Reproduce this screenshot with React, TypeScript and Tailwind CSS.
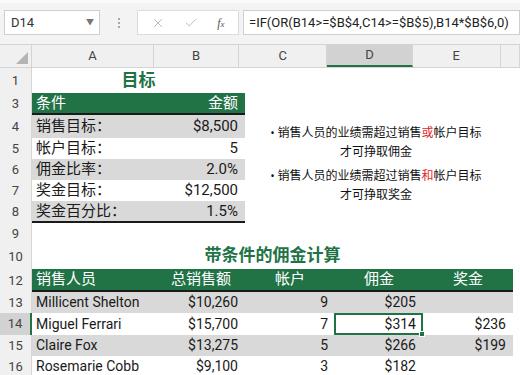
import { X, Check } from 'lucide-react';

const cjk = 'Roboto, "Noto Sans CJK SC", sans-serif';

type Cell = { text?: React.ReactNode; align?: 'left' | 'right' | 'center' };

const cols = [125, 88, 90, 88, 90, 20];

function RowHead({ n, active }: { n: number; active?: boolean }) {
  return (
    <div
      className={
        'w-[32px] shrink-0 flex items-center justify-center text-[13px] text-[#444] ' +
        (active ? 'bg-[#d2d2d2] border-r-2 border-[#217346]' : 'bg-[#f0f0f0] border-r border-[#d4d4d4]')
      }
    >
      {n}
    </div>
  );
}

function Row({
  n,
  h,
  cells = [],
  bg = '',
  span = 0,
  border,
  active,
  children,
}: {
  n: number;
  h: string;
  cells?: Cell[];
  bg?: string;
  span?: number;
  border?: boolean;
  active?: boolean;
  children?: React.ReactNode;
}) {
  return (
    <div className={'flex ' + h}>
      <RowHead n={n} active={active} />
      {children ?? (
        <div className="flex">
          <div className={'flex ' + bg + (border ? ' border-b-2 border-[#1a1a1a]' : '')}>
            {cells.slice(0, span).map((c, i) => (
              <Td key={i} w={cols[i]} c={c} />
            ))}
          </div>
          {cells.slice(span).map((c, i) => (
            <Td key={i} w={cols[i + span]} c={c} />
          ))}
        </div>
      )}
    </div>
  );
}

function Td({ w, c }: { w: number; c: Cell }) {
  const a = c.align === 'right' ? 'justify-end pr-[7px]' : c.align === 'center' ? 'justify-center' : 'justify-start pl-[4px]';
  return (
    <div className={'relative flex items-center whitespace-nowrap ' + a} style={{ width: w }}>
      {c.text}
    </div>
  );
}

const people = [
  ['Millicent Shelton', '$10,260', '9', '$205', ''],
  ['Miguel Ferrari', '$15,700', '7', '$314', '$236'],
  ['Claire Fox', '$13,275', '5', '$266', '$199'],
  ['Rosemarie Cobb', '$9,100', '3', '$182', ''],
];

const goals = [
  ['销售目标：', '$8,500'],
  ['帐户目标：', '5'],
  ['佣金比率：', '2.0%'],
  ['奖金目标：', '$12,500'],
  ['奖金百分比：', '1.5%'],
];

const goalH = ['h-[23px]', 'h-[21px]', 'h-[21px]', 'h-[21px]', 'h-[22px]'];
const peopleH = ['h-[21px]', 'h-[22px]', 'h-[21px]', 'h-[21px]'];

export default function App() {
  return (
    <div className="w-[520px] h-[375px] overflow-hidden bg-white relative text-[#1a1a1a]" style={{ fontFamily: cjk }}>
      {/* formula bar */}
      <div className="h-[45px] bg-[#f3f3f3] border-t-[3px] border-[#fafafa] border-b border-b-[#d4d4d4] flex items-center gap-[4px] pl-[4px] pb-[2px]">
        <div className="w-[96px] h-[25px] bg-white border border-[#cfcfcf] flex items-center justify-between pl-[6px] pr-[5px] text-[13px] text-[#333]">
          <span>D14</span>
          <span className="text-[8px] text-[#777]">▼</span>
        </div>
        <div className="w-[29px] flex flex-col items-center gap-[2px]">
          <span className="w-[2px] h-[2px] bg-[#aaa]" />
          <span className="w-[2px] h-[2px] bg-[#aaa]" />
          <span className="w-[2px] h-[2px] bg-[#aaa]" />
        </div>
        <div className="w-[102px] h-[25px] bg-white border border-[#dcdcdc] flex items-center justify-around px-[4px] text-[#b0b0b0]">
          <X size={14} strokeWidth={1.5} />
          <Check size={14} strokeWidth={1.5} />
          <span className="text-[12px] italic text-[#555]" style={{ fontFamily: '"Liberation Serif", serif' }}>
            f<span className="text-[9px]">x</span>
          </span>
        </div>
        <div className="flex-1 h-[25px] bg-white border border-[#cfcfcf] flex items-center pl-[5px] text-[13px] text-[#222] whitespace-nowrap overflow-hidden">
          =IF(OR(B14&gt;=$B$4,C14&gt;=$B$5),B14*$B$6,0)
        </div>
      </div>

      {/* column headers */}
      <div className="flex h-[23px] bg-[#f0f0f0] border-b border-[#d4d4d4] text-[13px] text-[#444]">
        <div className="w-[32px] shrink-0 border-r border-[#d4d4d4] flex items-end justify-end pr-[3px] pb-[3px]">
          <div className="w-0 h-0 border-l-[12px] border-l-transparent border-b-[12px] border-b-[#b4b4b4]" />
        </div>
        {['A', 'B', 'C', 'D', 'E', ''].map((l, i) => (
          <div
            key={i}
            className={
              'flex items-center justify-center border-r border-[#d4d4d4] ' +
              (l === 'D' ? 'bg-[#d2d2d2] border-b-2 border-b-[#217346]' : '')
            }
            style={{ width: cols[i] }}
          >
            {l}
          </div>
        ))}
      </div>

      {/* row 1 */}
      <Row n={1} h="h-[25px]">
        <div className="w-[213px] flex items-center justify-center text-[17px] font-bold text-[#217346]">目标</div>
      </Row>

      {/* row 3 */}
      <Row
        n={3}
        h="h-[22px]"
        span={2}
        border
        bg="bg-[#217346] text-white text-[15px]"
        cells={[{ text: '条件' }, { text: '金额', align: 'right' }]}
      />

      {goals.map(([k, v], i) => (
        <Row
          key={k}
          n={4 + i}
          h={goalH[i]}
          span={2}
          border={i === 4}
          bg={(i % 2 === 0 ? 'bg-[#d9d9d9]' : '') + ' text-[15px]'}
          cells={[{ text: k }, { text: v, align: 'right' }]}
        />
      ))}

      <Row n={9} h="h-[22px]" />

      {/* row 10 */}
      <Row n={10} h="h-[24px]">
        <div className="w-[481px] flex items-end justify-center pb-[1px] text-[17px] font-bold text-[#217346]">
          带条件的佣金计算
        </div>
      </Row>

      {/* row 12 */}
      <Row
        n={12}
        h="h-[23px]"
        span={5}
        border
        bg="bg-[#217346] text-white text-[15px]"
        cells={[
          { text: '销售人员' },
          { text: '总销售额', align: 'center' },
          { text: '帐户', align: 'center' },
          { text: '佣金', align: 'center' },
          { text: '奖金', align: 'center' },
        ]}
      />

      {people.map((p, i) => (
        <Row
          key={p[0]}
          n={13 + i}
          h={peopleH[i]}
          span={5}
          active={i === 1}
          bg={(i % 2 === 0 ? 'bg-[#d9d9d9]' : '') + ' text-[14px]'}
          cells={[
            { text: p[0] },
            { text: p[1], align: 'right' },
            { text: p[2], align: 'right' },
            {
              text:
                i === 1 ? (
                  <span className="absolute left-[-1px] right-0 top-0 bottom-0 border-2 border-[#217346] flex items-center justify-end pr-[5px]">
                    {p[3]}
                    <span className="absolute right-[-4px] bottom-[-4px] w-[6px] h-[6px] bg-[#217346] border border-white" />
                  </span>
                ) : (
                  p[3]
                ),
              align: 'right',
            },
            { text: p[4], align: 'right' },
          ]}
        />
      ))}

      {/* floating text box */}
      <div className="absolute left-[262px] top-[124px] w-[228px] flex flex-col items-center text-[12px] leading-[19px] text-[#111]">
        <div>• 销售人员的业绩需超过销售<span className="text-[#e0262a]">或</span>帐户目标</div>
        <div>才可挣取佣金</div>
        <div className="mt-[5px]">• 销售人员的业绩需超过销售<span className="text-[#e0262a]">和</span>帐户目标</div>
        <div>才可挣取奖金</div>
      </div>
    </div>
  );
}
